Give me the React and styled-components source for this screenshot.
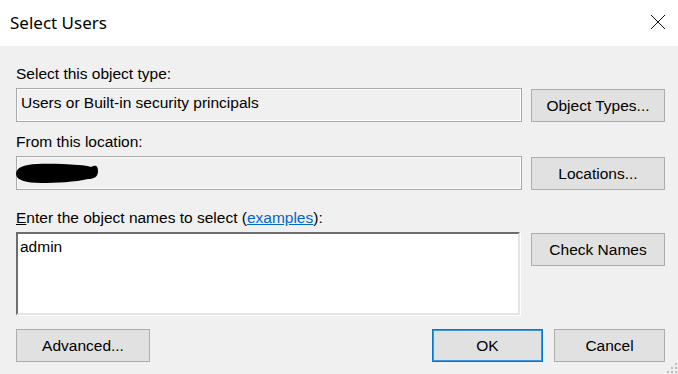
import styled, { createGlobalStyle } from 'styled-components'

const GlobalStyle = createGlobalStyle`
  html, body {
    margin: 0;
    padding: 0;
    background: #f0f0f0;
  }
`

const Window = styled.div`
  position: relative;
  width: 678px;
  height: 374px;
  display: flex;
  flex-direction: column;
  background: #f0f0f0;
  font-family: 'Liberation Sans', Arial, sans-serif;
  font-size: 15.5px;
  color: #000;
  overflow: hidden;
`

const TitleBar = styled.div`
  height: 46px;
  flex: none;
  background: #fff;
  display: flex;
  align-items: center;
  justify-content: space-between;
  padding: 0 12px 0 10px;
`

const Title = styled.span`
  font-family: 'Noto Sans', 'Open Sans', sans-serif;
  font-size: 17px;
  color: #000;
  margin-top: -2px;
`

const CloseIcon = styled.svg`
  width: 16px;
  height: 16px;
  margin-top: -2px;
`

const Body = styled.div`
  flex: 1;
  display: flex;
  flex-direction: column;
  padding: 19px 13px 0 16px;
`

const Label = styled.div`
  line-height: 18px;
  height: 18px;
  margin-top: ${(props) => props.gap || 0}px;
  margin-bottom: 5px;
  white-space: nowrap;
`

const Link = styled.a`
  color: #0066cc;
  text-decoration: underline;
  cursor: pointer;
`

const Row = styled.div`
  display: flex;
  align-items: flex-start;
  gap: ${(props) => props.gap || 9}px;
`

const ReadField = styled.div`
  box-sizing: border-box;
  width: 506px;
  height: 34px;
  border: 1px solid #a9a9a9;
  box-shadow: inset 0 0 0 1px #fbfbfb;
  background: #f0f0f0;
  padding: 5px 4px 0;
  line-height: 18px;
  display: flex;
  align-items: flex-start;
  white-space: nowrap;
`

const Blob = styled.svg`
  display: block;
  width: 82px;
  height: 20px;
  margin: 1px 0 0 -5px;
`

const NamesBox = styled.textarea`
  box-sizing: border-box;
  width: 504px;
  height: 83px;
  margin: 0 2px 0 0;
  resize: none;
  outline: none;
  border-style: solid;
  border-width: 2px;
  border-color: #6d6d6d #e3e3e3 #e3e3e3 #6d6d6d;
  box-shadow: 1px 1px 0 #fff;
  background: #fff;
  padding: 4px 2px;
  font-family: 'Liberation Sans', Arial, sans-serif;
  font-size: 15.5px;
  line-height: 18px;
  color: #000;
`

const Button = styled.button`
  box-sizing: border-box;
  width: ${(props) => props.width || 134}px;
  height: 33px;
  margin-top: ${(props) => props.offset || 0}px;
  padding: 1px 0 0;
  background: #e1e1e1;
  border: 1px solid ${(props) => (props.primary ? '#0078d7' : '#adadad')};
  box-shadow: ${(props) => (props.primary ? 'inset 0 0 0 1px #3d95e0' : 'none')};
  font-family: 'Liberation Sans', Arial, sans-serif;
  font-size: 15.5px;
  color: #000;
  cursor: pointer;
  flex: none;
`

const Footer = styled.div`
  display: flex;
  align-items: center;
  gap: 11px;
  margin-top: 14px;
`

const Spacer = styled.div`
  flex: 1;
`

const Grip = styled.svg`
  position: absolute;
  right: 1px;
  bottom: 1px;
  width: 10px;
  height: 10px;
`

export default function App() {
  return (
    <Window>
      <GlobalStyle />
      <TitleBar>
        <Title>Select Users</Title>
        <CloseIcon viewBox="0 0 16 16">
          <path d="M1 1 L15 15 M15 1 L1 15" stroke="#111" strokeWidth="1" fill="none" />
        </CloseIcon>
      </TitleBar>
      <Body>
        <Label>Select this object type:</Label>
        <Row>
          <ReadField>Users or Built-in security principals</ReadField>
          <Button offset={1}>Object Types...</Button>
        </Row>

        <Label gap={11}>From this location:</Label>
        <Row>
          <ReadField>
            <Blob viewBox="0 0 82 20">
              <path
                d="M0 11 C0 6 5 3 12 2 C25 0 45 1 62 2 C68 2 72 3 75 4 C79 2 82 2 82 8 C82 14 78 16 72 16 C60 19 40 20 25 20 C10 20 0 17 0 11 Z"
                fill="#000"
              />
            </Blob>
          </ReadField>
          <Button offset={1}>Locations...</Button>
        </Row>

        <Label gap={19}>
          <u>E</u>nter the object names to select (<Link>examples</Link>):
        </Label>
        <Row gap={9}>
          <NamesBox defaultValue="admin" spellCheck={false} />
          <Button offset={1}>Check Names</Button>
        </Row>

        <Footer>
          <Button>Advanced...</Button>
          <Spacer />
          <Button width={111} primary>
            OK
          </Button>
          <Button width={111}>Cancel</Button>
        </Footer>
      </Body>
      <Grip viewBox="0 0 10 10">
        <rect x="8" y="0" width="2" height="2" fill="#bcbcbc" />
        <rect x="4" y="4" width="2" height="2" fill="#bcbcbc" />
        <rect x="8" y="4" width="2" height="2" fill="#bcbcbc" />
        <rect x="0" y="8" width="2" height="2" fill="#bcbcbc" />
        <rect x="4" y="8" width="2" height="2" fill="#bcbcbc" />
        <rect x="8" y="8" width="2" height="2" fill="#bcbcbc" />
      </Grip>
    </Window>
  )
}
